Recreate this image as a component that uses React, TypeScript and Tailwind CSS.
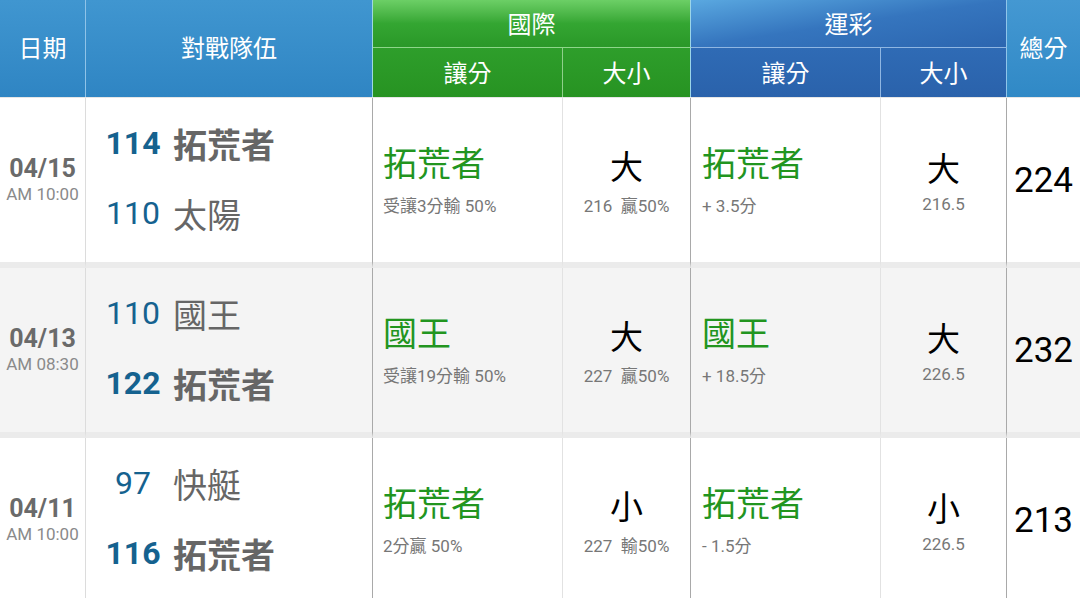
const cols = "grid grid-cols-[86px_287px_190px_128px_190px_126px_73px]";

type Match = {
  date: string;
  time: string;
  away: { score: string; name: string; win: boolean };
  home: { score: string; name: string; win: boolean };
  intlPick: string;
  intlNote: string;
  intlOu: string;
  intlOuNote: string;
  sportsPick: string;
  sportsNote: string;
  sportsOu: string;
  sportsOuNote: string;
  total: string;
};

const matches: Match[] = [
  {
    date: "04/15",
    time: "AM 10:00",
    away: { score: "114", name: "拓荒者", win: true },
    home: { score: "110", name: "太陽", win: false },
    intlPick: "拓荒者",
    intlNote: "受讓3分輸 50%",
    intlOu: "大",
    intlOuNote: "216  贏50%",
    sportsPick: "拓荒者",
    sportsNote: "+ 3.5分",
    sportsOu: "大",
    sportsOuNote: "216.5",
    total: "224",
  },
  {
    date: "04/13",
    time: "AM 08:30",
    away: { score: "110", name: "國王", win: false },
    home: { score: "122", name: "拓荒者", win: true },
    intlPick: "國王",
    intlNote: "受讓19分輸 50%",
    intlOu: "大",
    intlOuNote: "227  贏50%",
    sportsPick: "國王",
    sportsNote: "+ 18.5分",
    sportsOu: "大",
    sportsOuNote: "226.5",
    total: "232",
  },
  {
    date: "04/11",
    time: "AM 10:00",
    away: { score: "97", name: "快艇", win: false },
    home: { score: "116", name: "拓荒者", win: true },
    intlPick: "拓荒者",
    intlNote: "2分贏 50%",
    intlOu: "小",
    intlOuNote: "227  輸50%",
    sportsPick: "拓荒者",
    sportsNote: "- 1.5分",
    sportsOu: "小",
    sportsOuNote: "226.5",
    total: "213",
  },
];

function TeamLine({ score, name, win }: { score: string; name: string; win: boolean }) {
  return (
    <div className="flex h-[70px] items-center">
      <div
        className={
          "ml-[19px] w-[56px] text-center text-[32px] leading-none text-[#15628f] " +
          (win ? "font-bold" : "font-normal")
        }
      >
        {score}
      </div>
      <div
        className={
          "ml-[12px] mt-[6px] text-[34px] leading-none text-[#666666] " +
          (win ? "font-bold" : "font-normal")
        }
      >
        {name}
      </div>
    </div>
  );
}

function Row({ m, shade }: { m: Match; shade: boolean }) {
  const cell =
    "h-[170px] border-b-[6px] border-b-[#ebebeb] " + (shade ? "bg-[#f4f4f4]" : "bg-white");
  return (
    <div className={cols}>
      <div className={cell + " flex flex-col items-center justify-center border-r border-r-[#dcdcdc]"}>
        <div className="text-[25px] font-bold leading-[28px] text-[#6a6a6a]">{m.date}</div>
        <div className="text-[17px] leading-[22px] text-[#8a8a8a]">{m.time}</div>
      </div>
      <div className={cell + " flex flex-col justify-center border-r border-r-[#a9a9a9] pb-[4px]"}>
        <TeamLine {...m.away} />
        <TeamLine {...m.home} />
      </div>
      <div className={cell + " flex flex-col justify-center border-r border-r-[#e2e2e2] pl-[10px]"}>
        <div className="text-[34px] leading-[40px] text-[#22951f]">{m.intlPick}</div>
        <div className="mt-[12px] text-[17px] leading-[20px] text-[#777777]">{m.intlNote}</div>
      </div>
      <div className={cell + " flex flex-col items-center justify-center border-r border-r-[#a9a9a9] pt-[4px]"}>
        <div className="text-[33px] leading-[40px] text-black">{m.intlOu}</div>
        <div className="mt-[8px] whitespace-pre text-[17px] leading-[20px] text-[#777777]">{m.intlOuNote}</div>
      </div>
      <div className={cell + " flex flex-col justify-center border-r border-r-[#e2e2e2] pl-[11px]"}>
        <div className="text-[34px] leading-[40px] text-[#22951f]">{m.sportsPick}</div>
        <div className="mt-[12px] text-[17px] leading-[20px] text-[#777777]">{m.sportsNote}</div>
      </div>
      <div className={cell + " flex flex-col items-center justify-center border-r border-r-[#a9a9a9] pt-[4px]"}>
        <div className="text-[33px] leading-[40px] text-black">{m.sportsOu}</div>
        <div className="mt-[4px] text-[17px] leading-[20px] text-[#777777]">{m.sportsOuNote}</div>
      </div>
      <div className={cell + " flex items-center justify-center"}>
        <div className="text-[35px] leading-none text-black">{m.total}</div>
      </div>
    </div>
  );
}

export default function App() {
  return (
    <div className="h-[598px] w-[1080px] overflow-hidden bg-white font-['Roboto','Noto_Sans_CJK_TC',sans-serif]">
      {/* Header */}
      <div className={cols + " h-[97px] grid-rows-[48px_49px] text-[24px] text-white"}>
        <div className="row-span-2 flex items-center justify-center border-r border-r-[#8fc3e8] bg-gradient-to-b from-[#4096d0] to-[#2f85c3]">
          日期
        </div>
        <div className="row-span-2 flex items-center justify-center border-r border-r-[#9fd9e0] bg-gradient-to-b from-[#4096d0] to-[#2f85c3]">
          對戰隊伍
        </div>
        <div className="col-span-2 flex items-center justify-center border-b border-b-[#8ed68a] border-r border-r-[#9bd5e8] bg-gradient-to-b from-[#6ccf66] via-[#34a632] to-[#2a9828] pt-[3px]">
          國際
        </div>
        <div className="col-span-2 flex items-center justify-center border-b border-b-[#8fb6e2] border-r border-r-[#8fc5ea] bg-gradient-to-br from-[#5aa8e0] via-[#3575be] to-[#2c66b0] pt-[3px]">
          運彩
        </div>
        <div className="row-span-2 flex items-center justify-center bg-gradient-to-b from-[#4498d2] to-[#3089c6]">
          總分
        </div>
        <div className="flex items-center justify-center border-r border-r-[#8fd08b] bg-gradient-to-b from-[#2e9e2b] to-[#279322] pt-[2px]">
          讓分
        </div>
        <div className="flex items-center justify-center border-r border-r-[#9bd5e8] bg-gradient-to-b from-[#2e9e2b] to-[#279322] pt-[2px]">
          大小
        </div>
        <div className="flex items-center justify-center border-r border-r-[#8fb6e2] bg-gradient-to-b from-[#2f6bb5] to-[#2a62ab] pt-[2px]">
          讓分
        </div>
        <div className="flex items-center justify-center border-r border-r-[#8fc5ea] bg-gradient-to-b from-[#2f6bb5] to-[#2a62ab] pt-[2px]">
          大小
        </div>
      </div>
      <div className="h-px bg-[#e6e6e6]" />

      {/* Body */}
      {matches.map((m, i) => (
        <Row key={m.date} m={m} shade={i === 1} />
      ))}
    </div>
  );
}
